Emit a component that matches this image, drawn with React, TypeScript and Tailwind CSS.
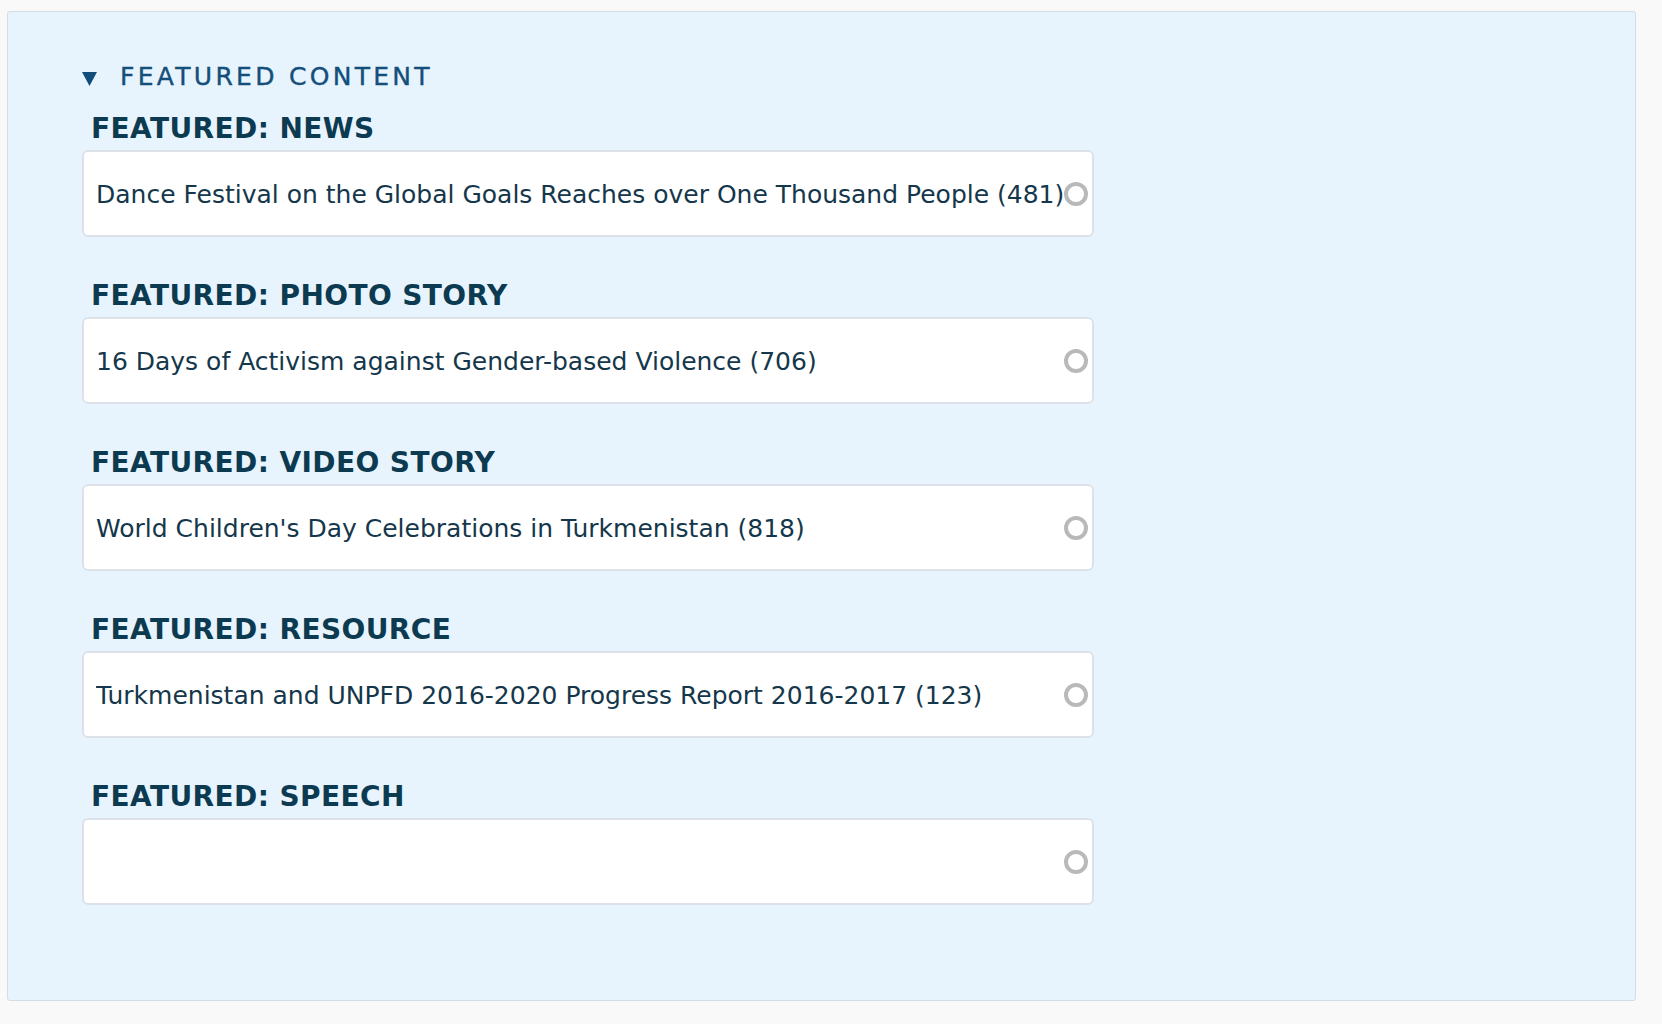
import React from "react";

const fields = [
  {
    label: "Featured: News",
    value: "Dance Festival on the Global Goals Reaches over One Thousand People (481)",
  },
  {
    label: "Featured: Photo Story",
    value: "16 Days of Activism against Gender-based Violence (706)",
  },
  {
    label: "Featured: Video Story",
    value: "World Children's Day Celebrations in Turkmenistan (818)",
  },
  {
    label: "Featured: Resource",
    value: "Turkmenistan and UNPFD 2016-2020 Progress Report 2016-2017 (123)",
  },
  {
    label: "Featured: Speech",
    value: "",
  },
];

const font = { fontFamily: '"DejaVu Sans", "Lucida Grande", Verdana, sans-serif' };

const AutocompleteField = ({ label, value }: { label: string; value: string }) => (
  <div className="mb-[43px]">
    <label className="block pl-[9px] mb-[5px] text-[28px] leading-[32px] tracking-[0.4px] font-bold uppercase text-[#0c3a50]">
      {label}
    </label>
    <div className="flex items-center w-[1012px] h-[87px] bg-white border-2 border-[#dce2e8] rounded-[6px] pl-[12px] pr-[4px] pt-[3px]">
      <span className="flex-1 overflow-hidden whitespace-nowrap text-[25px] leading-[30px] text-[#15374b]">
        {value}
      </span>
      {/* throbber */}
      <span className="shrink-0 -mt-[3px] w-[24px] h-[24px] rounded-full border-[4px] border-[#b9b9b9] blur-[0.6px]" />
    </div>
  </div>
);

export default function App() {
  return (
    <div className="min-h-screen bg-[#f9f9f9] pt-[11px] pl-[7px] pr-[26px]" style={font}>
      <fieldset className="h-[990px] bg-[#e8f4fd] border border-[#d3dde6] rounded-[3px] pl-[74px] pt-[50px]">
        <div className="flex items-center mb-[21px]">
          <svg width="15" height="14" viewBox="0 0 15 14" className="mt-[3px]">
            <polygon points="0,0 15,0 7.5,14" fill="#104d78" />
          </svg>
          <span className="ml-[23px] text-[25px] leading-[30px] tracking-[3.3px] uppercase text-[#134f7a] [-webkit-text-stroke:0.4px_#134f7a]">
            Featured Content
          </span>
        </div>
        {fields.map((f, i) => (
          <AutocompleteField key={i} label={f.label} value={f.value} />
        ))}
      </fieldset>
    </div>
  );
}
